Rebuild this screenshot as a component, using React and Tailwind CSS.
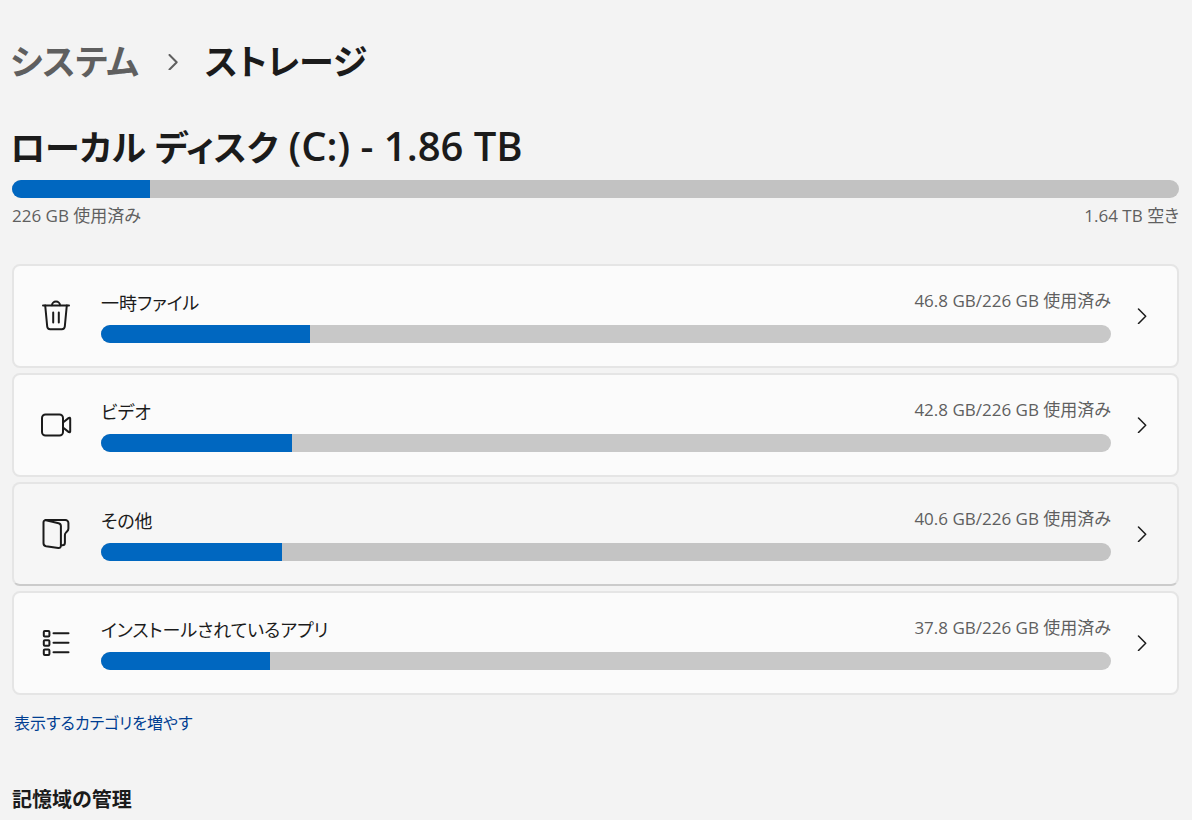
const TOTAL_USED = 226;

function TrashIcon() {
  return (
    <svg
      viewBox="0 0 32 32"
      className="size-8"
      fill="none"
      stroke="currentColor"
      strokeWidth="2"
      strokeLinecap="round"
      strokeLinejoin="round"
      aria-hidden="true"
    >
      <path d="M3 5.500h26" />
      <path d="M12 5.200a4 3.600 0 0 1 8 0" />
      <path d="M5.200 5.500 7.200 26.500a3 3 0 0 0 3 2.700h11.600a3 3 0 0 0 3-2.700L26.800 5.500" />
      <path d="M13.200 12.500v10M18.800 12.500v10" />
    </svg>
  );
}

function VideoIcon() {
  return (
    <svg
      viewBox="0 0 32 32"
      className="size-8"
      fill="none"
      stroke="currentColor"
      strokeWidth="2"
      strokeLinejoin="round"
      aria-hidden="true"
    >
      <rect x="2" y="5.500" width="21" height="21" rx="3.500" />
      <path d="M23 13.500l5.800-4.600c.6-.5 1.400-.1 1.400.6v13c0 .7-.8 1.100-1.400.6L23 18.500" />
    </svg>
  );
}

function FolderIcon() {
  return (
    <svg
      viewBox="0 0 32 32"
      className="size-8"
      fill="none"
      stroke="currentColor"
      strokeWidth="2"
      strokeLinecap="round"
      strokeLinejoin="round"
      aria-hidden="true"
    >
      <path d="M5.500 2h19.900a3 3 0 0 1 3 3v5.500c0 1.200-.4 2-1.200 2.800l-1.300 1.300c-.7.700-1 1.300-1 2.300v7.800a2.500 2.500 0 0 1-2.500 2.500h-1.400" />
      <path d="M3.500 4.400c0-1.500 1-2.300 2.500-2.100l12.600 2.900c1.600.4 2.300 1.300 2.300 2.800v19.500c0 1.700-1 2.600-2.600 2.400L6.100 28.200c-1.700-.3-2.600-1.300-2.600-3z" />
    </svg>
  );
}

function AppListIcon() {
  return (
    <svg
      viewBox="0 0 32 32"
      className="size-8"
      fill="none"
      stroke="currentColor"
      strokeWidth="2"
      strokeLinecap="round"
      aria-hidden="true"
    >
      <rect x="3.800" y="4" width="5.600" height="5.600" rx="1" />
      <rect x="3.800" y="13.200" width="5.600" height="5.600" rx="1" />
      <rect x="3.800" y="22.500" width="5.600" height="5.600" rx="1" />
      <path d="M13.500 6.300H28.500M13.500 15.700H28.500M13.500 25.200H28.500" />
    </svg>
  );
}

function Chevron({ className, strokeWidth = 1.5 }) {
  return (
    <svg
      viewBox="0 0 16 16"
      className={className}
      fill="none"
      stroke="currentColor"
      strokeWidth={strokeWidth}
      strokeLinecap="round"
      strokeLinejoin="round"
      aria-hidden="true"
    >
      <path d="M4.500 1 11.700 8.300 4.500 15.500" />
    </svg>
  );
}

function UsageBar({ label, percent, track }) {
  return (
    <div
      role="progressbar"
      aria-label={label}
      aria-valuenow={Math.round(percent)}
      aria-valuemin={0}
      aria-valuemax={100}
      className={`h-[18px] w-full overflow-hidden rounded-full ${track}`}
    >
      <div className="h-full bg-[#0067c0]" style={{ width: `${percent}%` }} />
    </div>
  );
}

const categories = [
  { name: "一時ファイル", used: 46.8, icon: TrashIcon },
  { name: "ビデオ", used: 42.8, icon: VideoIcon },
  { name: "その他", used: 40.6, icon: FolderIcon, hovered: true },
  { name: "インストールされているアプリ", used: 37.8, icon: AppListIcon },
];

function CategoryCard({ name, used, icon: Icon, hovered }) {
  return (
    <button
      type="button"
      className={`flex h-[104px] w-full items-center rounded-lg border-2 pr-[27px] pl-[26px] text-left ${
        hovered
          ? "border-[#e5e5e5] border-b-[#cbcbcb] bg-[#f6f6f6]"
          : "border-[#e5e5e5] bg-[#fbfbfb]"
      }`}
    >
      <Icon />
      <div className="ml-[29px] flex-1">
        <div className="mb-[10px] flex items-start justify-between">
          <span className="pt-[2px] text-[18px] leading-6">{name}</span>
          <span className="text-[17px] leading-6 text-[#5f5f5f]">
            {used} GB/{TOTAL_USED} GB 使用済み
          </span>
        </div>
        <UsageBar
          label={name}
          percent={(used / TOTAL_USED) * 100}
          track={hovered ? "bg-[#c4c4c4]" : "bg-[#c8c8c8]"}
        />
      </div>
      <Chevron className="ml-[23px] size-4" />
    </button>
  );
}

export default function App() {
  return (
    <main className="min-h-screen bg-[#f3f3f3] pt-8 pr-[13px] pl-3 font-['Open_Sans','Noto_Sans_CJK_JP',sans-serif] text-[#1b1b1b] [font-feature-settings:'palt']">
      <nav
        aria-label="階層"
        className="-ml-[2px] flex items-center text-[35px] leading-[60px] font-semibold"
      >
        <a href="#system" className="text-[#5f5f5f]">
          システム
        </a>
        <Chevron
          className="mr-6 ml-[26px] size-4 text-[#5f5f5f]"
          strokeWidth={2}
        />
        <h1>ストレージ</h1>
      </nav>

      <section className="mt-6">
        <h2 className="-ml-[2px] text-[40px] leading-[60px] font-semibold">
          <span className="text-[35px]">ローカル ディスク</span> (C:) - 1.86 TB
        </h2>
        <div className="mt-[2px]">
          <UsageBar
            label="ローカル ディスク (C:)"
            percent={11.8}
            track="bg-[#c2c2c2]"
          />
        </div>
        <div className="mt-[6px] flex justify-between text-[17px] leading-6 text-[#5f5f5f]">
          <span>{TOTAL_USED} GB 使用済み</span>
          <span>1.64 TB 空き</span>
        </div>
      </section>

      <ul className="mt-9 flex flex-col gap-[5px]">
        {categories.map((category) => (
          <li key={category.name}>
            <CategoryCard {...category} />
          </li>
        ))}
      </ul>

      <a
        href="#categories"
        className="mt-4 ml-[2px] inline-block text-[16px] leading-6 text-[#003e92]"
      >
        表示するカテゴリを増やす
      </a>

      <h2 className="mt-[51px] text-[20px] leading-7 font-semibold">
        記憶域の管理
      </h2>
    </main>
  );
}
